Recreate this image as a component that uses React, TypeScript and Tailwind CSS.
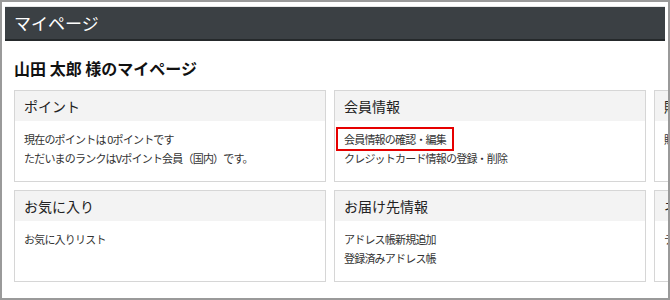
const font = "font-['Noto_Sans_CJK_JP','Noto_Sans',sans-serif]";

type Card = {
  title: string;
  lines: { text: string; boxed?: boolean }[];
};

const rows: Card[][] = [
  [
    {
      title: "ポイント",
      lines: [
        { text: "現在のポイントは 0ポイントです" },
        { text: "ただいまのランクはVポイント会員（国内）です。" },
      ],
    },
    {
      title: "会員情報",
      lines: [
        { text: "会員情報の確認・編集", boxed: true },
        { text: "クレジットカード情報の登録・削除" },
      ],
    },
    {
      title: "購入履歴",
      lines: [{ text: "購入履歴の確認" }],
    },
  ],
  [
    {
      title: "お気に入り",
      lines: [{ text: "お気に入りリスト" }],
    },
    {
      title: "お届け先情報",
      lines: [{ text: "アドレス帳新規追加" }, { text: "登録済みアドレス帳" }],
    },
    {
      title: "ネットサービス",
      lines: [{ text: "テレビ番組表" }],
    },
  ],
];

function InfoCard({ card }: { card: Card }) {
  return (
    <div className="w-[312px] h-[92px] shrink-0 border border-[#d6d6d6] bg-white">
      <div className="h-[30px] bg-[#f3f3f3] pl-[9px] flex items-center text-[14px] text-[#222]">
        {card.title}
      </div>
      <div className="pt-[9px] pl-[9px] text-[11px] tracking-[-0.8px] text-[#333] leading-[19px]">
        {card.lines.map((l) =>
          l.boxed ? (
            <div key={l.text} className="h-[19px] flex">
              <span className="-ml-[8px] -mt-[3px] h-[24px] pl-[6px] pr-[6px] border-2 border-[#e60000] leading-[20px]">
                {l.text}
              </span>
            </div>
          ) : (
            <div key={l.text}>{l.text}</div>
          )
        )}
      </div>
    </div>
  );
}

export default function App() {
  return (
    <div className={`w-[670px] h-[300px] bg-white ${font}`}>
      <div className="h-full border-2 border-[#9a9a9a] overflow-hidden pt-[4px] px-[3px]">
        <div className="h-[35px] bg-[#3b4044] border-t border-[#e8e8e8] border-b-2 border-b-[#25292b] flex items-center pl-[9px] text-white text-[17px]">
          マイページ
        </div>
        <div className="pl-[9px]">
          <h1 className="mt-[17px] h-[20px] flex items-center text-[16px] font-bold text-[#111]">
            山田 太郎 様のマイページ
          </h1>
          <div className="mt-[12px] flex flex-col gap-[8px]">
            {rows.map((row, i) => (
              <div key={i} className="flex gap-[8px]">
                {row.map((c) => (
                  <InfoCard key={c.title} card={c} />
                ))}
              </div>
            ))}
          </div>
        </div>
      </div>
    </div>
  );
}
